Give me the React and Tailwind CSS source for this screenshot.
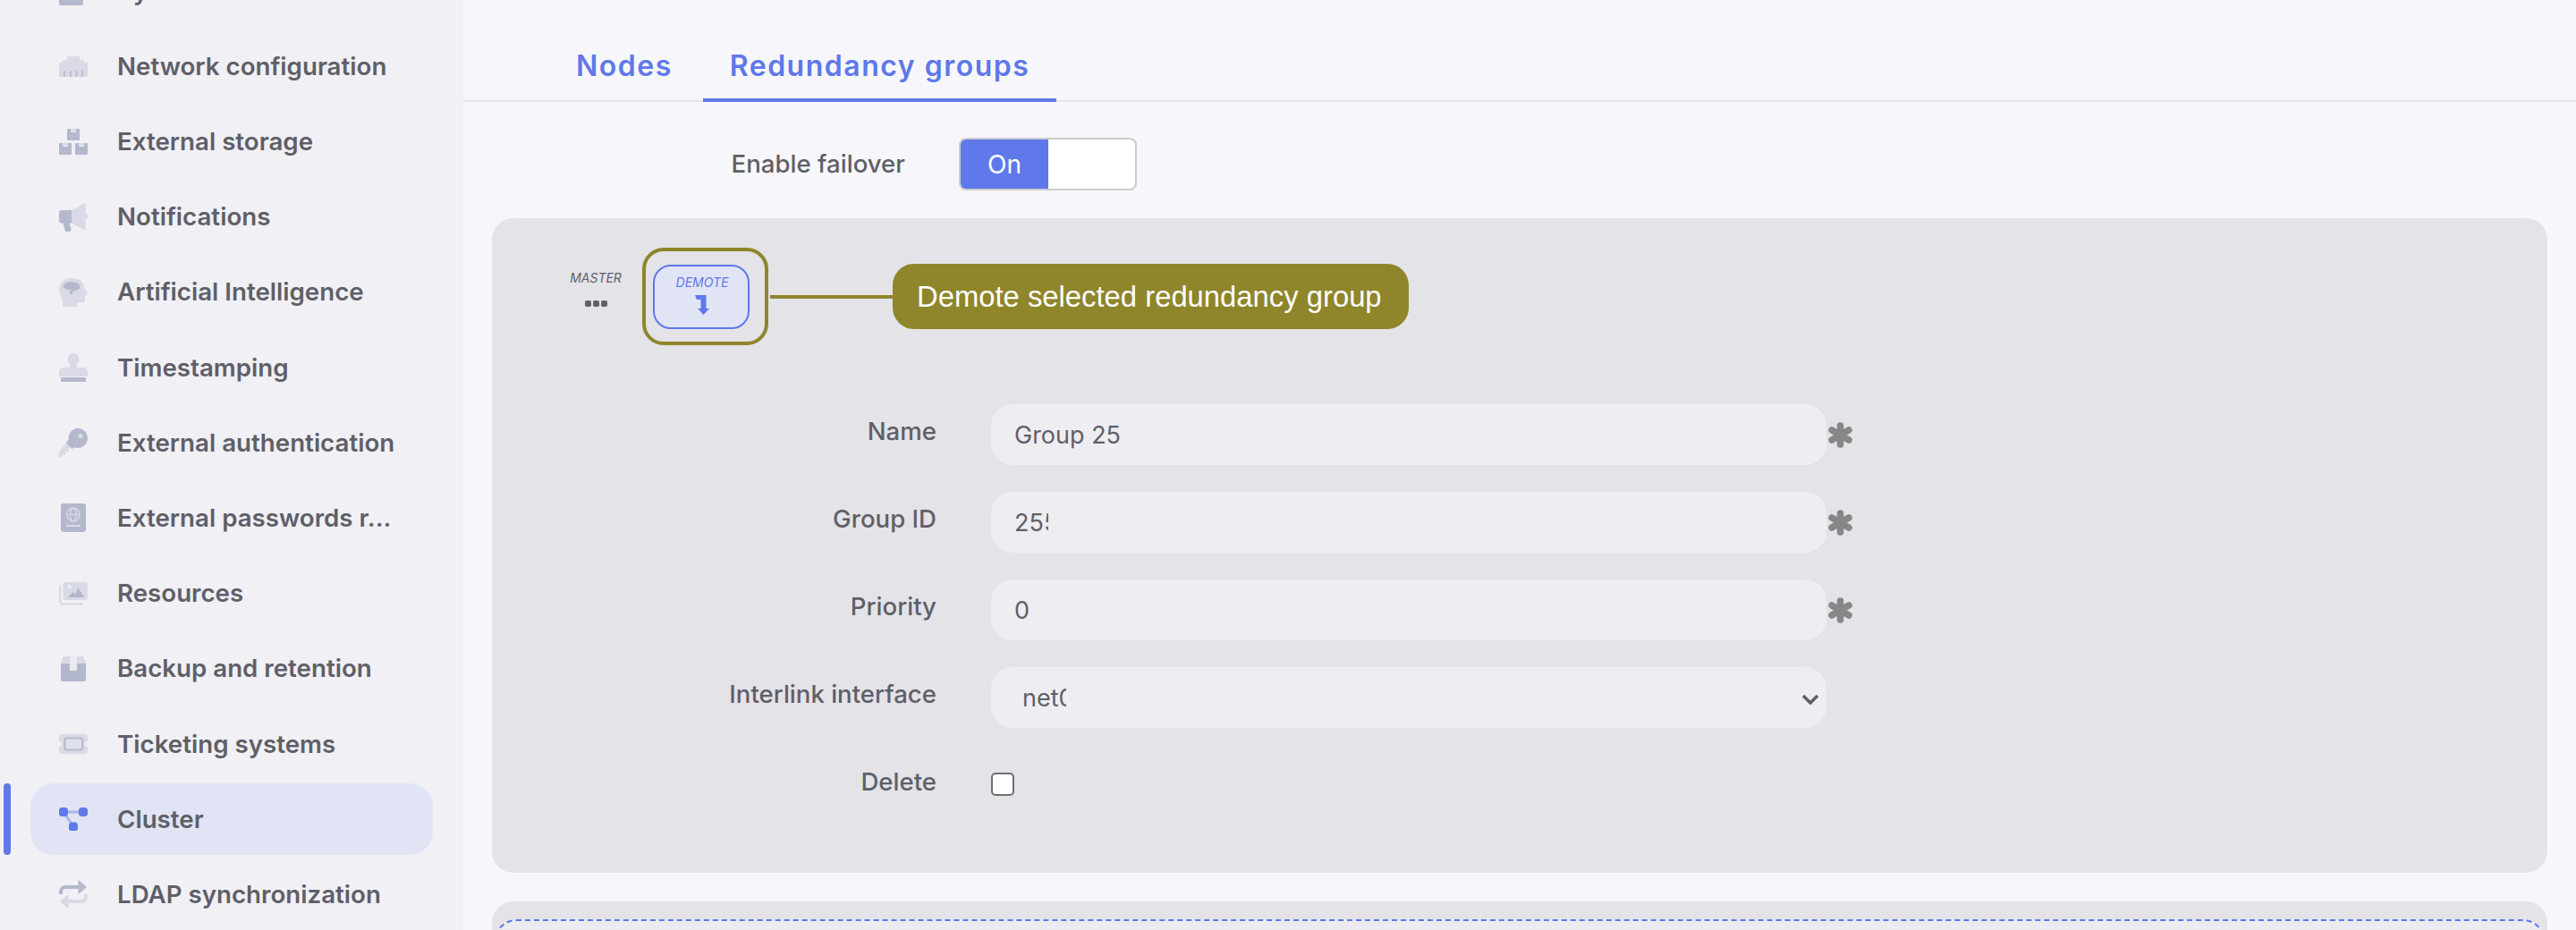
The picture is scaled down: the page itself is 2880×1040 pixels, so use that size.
import React from "react";

const L = "#d9dae5";
const D = "#b4b8cc";

const NetworkIcon = () => (
  <svg width="32" height="24" viewBox="0 0 32 24">
    <path fill={L} d="M0 24V8h4V5h5V1h14v4h5v3h4v16z" />
    <path stroke={D} strokeWidth="1.6" d="M6 17v7M13 17v7M19.5 17v7M26 17v7" />
  </svg>
);

const StorageIcon = () => (
  <svg width="32" height="29" viewBox="0 0 32 29">
    <path fill={D} d="M10 0h3v4h6V0h3a1 1 0 0 1 1 1v11a1 1 0 0 1-1 1H10a1 1 0 0 1-1-1V1a1 1 0 0 1 1-1z" />
    <path fill={D} d="M1 16h3v4h6v-4h3a1 1 0 0 1 1 1v11a1 1 0 0 1-1 1H1a1 1 0 0 1-1-1V17a1 1 0 0 1 1-1zM19 16h3v4h6v-4h3a1 1 0 0 1 1 1v11a1 1 0 0 1-1 1H19a1 1 0 0 1-1-1V17a1 1 0 0 1 1-1z" />
    <path fill={L} d="M13 0h6v4l-3-1.500L13 4zM4 16h6v4l-3-1.500L4 20zM22 16h6v4l-3-1.500L22 20z" />
  </svg>
);

const MegaphoneIcon = () => (
  <svg width="32" height="32" viewBox="0 0 32 32">
    <path fill={L} d="M14 8L28.500.5c.7-.3 1.200.1 1.200.8V12a3 3 0 0 1 0 6v11.500c0 .7-.5 1.100-1.200.8L14 22.500z" />
    <path fill={D} d="M3 8h11v14.500h-2.500l2 6.500c.5 1.700-.5 3-2.200 3H8.500c-1 0-1.800-.6-2-1.600l-2-7.900H3a3 3 0 0 1-3-3V11a3 3 0 0 1 3-3z" />
  </svg>
);

const BrainIcon = () => (
  <svg width="32" height="32" viewBox="0 0 32 32">
    <path fill={L} d="M14 0c8 0 14 4 14 11 1 2 4 5 4 7 0 1-1 2-3 2v5c0 1-1 2-3 2h-6v5H4v-8C2 21 0 17 0 13 0 6 6 0 14 0z" />
    <path fill={D} d="M10 5c1-1 3-1.500 4 0 2-1 4-.5 5 .5 2 0 4 1 4 3.500 1 2-1 4-3 4-1 1.500-3 1.500-4 .5l-1 4.500h-3l1-5.500c-2 1-5 .5-6-1-2.500 0-3-3-1-4 0-2 2-3 4-2.500z" />
  </svg>
);

const StampIcon = () => (
  <svg width="32" height="32" viewBox="0 0 32 32">
    <path fill={L} d="M16 0a6.500 6.500 0 0 1 4 11.500c-.6 1-.5 3 .5 4.500H27a5 5 0 0 1 5 5v5H0v-5a5 5 0 0 1 5-5h6.500c1-1.500 1.100-3.500.5-4.500A6.500 6.500 0 0 1 16 0z" />
    <path fill={D} d="M2 27h28v5H2z" />
  </svg>
);

const KeyIcon = () => (
  <svg width="32" height="32" viewBox="0 0 32 32">
    <path fill={L} d="M11 13l6 7-3.500 2.500h-3v3.500H7v3.500H3.500V32H0v-6z" />
    <path fill={D} d="M21 0a11 11 0 1 1-4.200 21.200L15 23l-7-7 2.700-3.500A11 11 0 0 1 21 0z" />
    <circle cx="24" cy="8.500" r="2.500" fill={L} />
  </svg>
);

const PassportIcon = () => (
  <svg width="28" height="32" viewBox="0 0 28 32">
    <rect width="28" height="32" rx="3" fill={D} />
    <g fill="none" stroke={L} strokeWidth="1.400">
      <circle cx="14" cy="12.500" r="7.300" />
      <ellipse cx="14" cy="12.500" rx="3.400" ry="7.300" />
      <path d="M6.700 12.500h14.600" />
    </g>
    <rect x="6" y="24" width="16" height="2" fill={L} />
  </svg>
);

const ImagesIcon = () => (
  <svg width="32" height="26" viewBox="0 0 32 26">
    <path fill="none" stroke={L} strokeWidth="2.400" d="M1.200 3v18a3.500 3.500 0 0 0 3.500 3.500H27" />
    <rect x="4.500" y="0" width="27.500" height="20" rx="2.500" fill={L} />
    <path fill={D} d="M10 17l5.500-6 2.500 2.500 3.500-7L28.500 17z" />
    <circle cx="11.500" cy="5" r="2" fill="#f0f0f5" />
  </svg>
);

const BoxIcon = () => (
  <svg width="28" height="28" viewBox="0 0 28 28">
    <path fill={L} d="M3 0h22l3 8H0z" />
    <path fill={D} d="M0 8h28v18a2 2 0 0 1-2 2H2a2 2 0 0 1-2-2z" />
    <path fill="#e9e9f0" d="M10 0h8v16h-8z" />
  </svg>
);

const TicketIcon = () => (
  <svg width="32" height="22" viewBox="0 0 32 22">
    <path fill={L} d="M3 0h26a3 3 0 0 1 3 3v5a3 3 0 0 0 0 6v5a3 3 0 0 1-3 3H3a3 3 0 0 1-3-3v-5a3 3 0 0 0 0-6V3a3 3 0 0 1 3-3z" />
    <rect x="6.500" y="4.500" width="19.500" height="13" rx="1.500" fill="#dfe0e9" stroke={D} strokeWidth="2" />
  </svg>
);

const ClusterIcon = () => (
  <svg width="32" height="26" viewBox="0 0 32 26">
    <path stroke="#a9b5ef" strokeWidth="3" fill="none" d="M8 5h16M7 8l7 10" />
    <rect x="0" y="0" width="10" height="10" rx="3.500" fill="#5f78ea" />
    <rect x="22" y="0" width="10" height="10" rx="3.500" fill="#5f78ea" />
    <rect x="11" y="16.500" width="10" height="10" rx="3.500" fill="#5f78ea" />
  </svg>
);

const RepeatIcon = () => (
  <svg width="32" height="32" viewBox="0 0 32 32">
    <path fill="none" stroke={D} strokeWidth="4" d="M2 16v-3c0-3 2-5 5-5h20" />
    <path fill={D} d="M21.500 0L31 8l-9.500 8z" />
    <path fill="none" stroke={L} strokeWidth="4" d="M30 16v3c0 3-2 5-5 5H5" />
    <path fill={L} d="M10.500 16L1 24l9.500 8z" />
  </svg>
);

const SystemIcon = () => (
  <svg width="32" height="32" viewBox="0 0 32 32">
    <rect x="0" y="6" width="27" height="26" rx="2" fill={D} />
  </svg>
);

const RequiredIcon = () => (
  <svg width="27" height="29" viewBox="0 0 27 29" className="ml-[2px]">
    <g stroke="#878787" strokeWidth="7.500" strokeLinecap="round">
      <path d="M13.500 4v21M4 9l19 11M23 9L4 20" />
    </g>
    <circle cx="13.500" cy="14.500" r="7" fill="#878787" />
  </svg>
);

const menuItems = [
  { icon: SystemIcon, label: "System" },
  { icon: NetworkIcon, label: "Network configuration" },
  { icon: StorageIcon, label: "External storage" },
  { icon: MegaphoneIcon, label: "Notifications" },
  { icon: BrainIcon, label: "Artificial Intelligence" },
  { icon: StampIcon, label: "Timestamping" },
  { icon: KeyIcon, label: "External authentication" },
  { icon: PassportIcon, label: "External passwords r..." },
  { icon: ImagesIcon, label: "Resources" },
  { icon: BoxIcon, label: "Backup and retention" },
  { icon: TicketIcon, label: "Ticketing systems" },
  { icon: ClusterIcon, label: "Cluster", active: true },
  { icon: RepeatIcon, label: "LDAP synchronization" },
];

const Sidebar = () => (
  <aside className="w-[518px] flex-none h-full bg-[#f0f0f5] overflow-hidden">
    <ul className="-mt-[50px] flex flex-col gap-[4.2px]">
      {menuItems.map((item) => {
        const Icon = item.icon;
        return (
          <li key={item.label} className="relative h-[80px] pl-[34px] pr-[34px]">
            {item.active && <div className="absolute left-[4px] top-0 h-[80px] w-[8px] rounded-full bg-[#5f78ea]" />}
            <div className={`flex h-full items-center rounded-[26px] pl-[32px] ${item.active ? "bg-[#e1e4f5]" : ""}`}>
              <span className="flex w-[32px] flex-none justify-center">
                <Icon />
              </span>
              <span className="ml-[33px] mt-[1px] text-[27.7px] font-semibold text-[#5f5f68] whitespace-nowrap">{item.label}</span>
            </div>
          </li>
        );
      })}
    </ul>
  </aside>
);

const fields = [
  { label: "Name", value: "Group 255", clip: "w-[118px]" },
  { label: "Group ID", value: "255", clip: "w-[38px]" },
  { label: "Priority", value: "0", clip: "w-[38px]" },
];

const FormRow = ({ label, children }) => (
  <div className="flex items-start">
    <label className="w-[497px] flex-none pt-[12px] text-right text-[27.6px] leading-[36px] font-medium text-[#5f5f68]">{label}</label>
    <div className="ml-[61px] flex items-center">{children}</div>
  </div>
);

const Field = ({ children }) => (
  <div className="flex h-[68px] w-[934px] items-center rounded-[24px] bg-[#edEDf2] pl-[26px] pt-[3px] text-[27px] text-[#5f5f68]">{children}</div>
);

export default function App() {
  return (
    <div className="flex h-[1040px] w-[2880px] overflow-hidden bg-[#f7f7fb]" style={{ fontFamily: "Inter, sans-serif" }}>
      <Sidebar />
      <main className="min-w-0 flex-1">
        {/* Tabs */}
        <div className="flex h-[114px] border-b-2 border-[#e3e6ee] pl-[96px]">
          <button className="h-[114px] border-b-4 border-transparent px-[30px] pt-[38px] text-[32px] font-semibold tracking-[1.5px] text-[#5f78ea]">Nodes</button>
          <button className="ml-[4px] h-[114px] border-b-4 border-[#5f78ea] px-[30px] pt-[38px] text-[32px] font-semibold tracking-[1.5px] text-[#5f78ea]">
            Redundancy groups
          </button>
        </div>

        {/* Failover */}
        <div className="mt-[40px] flex h-[59px] items-center">
          <span className="w-[494px] flex-none text-right text-[27.6px] font-medium text-[#5f5f68]">Enable failover</span>
          <div className="ml-[60px] flex h-[59px] w-[199px] overflow-hidden rounded-[8px] border-2 border-[#cccccc] bg-white">
            <div className="flex w-[98px] items-center justify-center bg-[#5f78ea] text-[28px] text-white">On</div>
          </div>
        </div>

        {/* Group panel */}
        <section className="ml-[32px] mt-[31px] h-[732px] w-[2298px] rounded-[24px] bg-[#e3e3e8]">
          <div className="ml-[59px] mr-[98px] flex h-[167px] items-center border-b-2 border-[#e5e6ec] pt-[10px]">
            <div className="ml-[29px] mb-[19px] flex w-[56px] flex-col items-center">
              <span className="text-[14px] leading-[17px] italic text-[#5f5f68]">MASTER</span>
              <span className="mt-[17px] flex gap-[2px]">
                <i className="h-[7px] w-[7px] rounded-[2px] bg-[#5f5f68]" />
                <i className="h-[7px] w-[7px] rounded-[2px] bg-[#5f5f68]" />
                <i className="h-[7px] w-[7px] rounded-[2px] bg-[#5f5f68]" />
              </span>
            </div>
            <div className="ml-[24px] flex h-[109px] w-[141px] items-center rounded-[24px] border-4 border-[#8f852b] pl-[8px]">
              <div className="flex h-[72px] w-[108px] flex-col items-center rounded-[20px] border-2 border-[#5f78ea] bg-[#e1e4f5] pt-[9px]">
                <span className="ml-[2px] text-[14px] leading-[17px] italic text-[#5f78ea]">DEMOTE</span>
                <svg width="16" height="22" viewBox="0 0 16 22" className="ml-[2px] mt-[6px]">
                  <path fill="#5f78ea" d="M0 0h12.500v15H16l-6.500 7L3 15h3.500V5H2z" />
                </svg>
              </div>
            </div>
            <div className="ml-[2px] h-[4px] w-[137px] bg-[#8f852b]" />
            <div className="flex h-[73px] w-[577px] items-center rounded-[24px] bg-[#8f852b] pl-[27px] text-[32.8px] whitespace-nowrap text-white" style={{ fontFamily: "'Liberation Sans', sans-serif" }}>
              Demote selected redundancy group
            </div>
          </div>

          <div className="mt-[41px] flex flex-col gap-[30px]">
            {fields.map((f) => (
              <FormRow key={f.label} label={f.label}>
                <Field>
                  <span className={`${f.clip} overflow-hidden whitespace-nowrap`}>{f.value}</span>
                </Field>
                <RequiredIcon />
              </FormRow>
            ))}
            <FormRow label="Interlink interface">
              <Field>
                <span className="ml-[9px] w-[49px] overflow-hidden whitespace-nowrap">net0</span>
                <svg width="20" height="12" viewBox="0 0 20 12" className="ml-auto mr-[8px]">
                  <path d="M2 2l8 8 8-8" fill="none" stroke="#5f5f68" strokeWidth="3.500" />
                </svg>
              </Field>
            </FormRow>
            <FormRow label="Delete">
              <input type="checkbox" className="mt-[20px] h-[26px] w-[26px] appearance-none rounded-[5px] border-2 border-[#707070] bg-white" />
            </FormRow>
          </div>
        </section>

        {/* Next group, dashed drop zone */}
        <section className="ml-[32px] mt-[32px] h-[200px] w-[2298px] rounded-[24px] bg-[#e3e3e8] px-[3px] pt-[20px]">
          <div className="h-full rounded-[24px] border-2 border-dashed border-[#5f78ea] bg-[#ebebf0]" />
        </section>
      </main>
    </div>
  );
}
